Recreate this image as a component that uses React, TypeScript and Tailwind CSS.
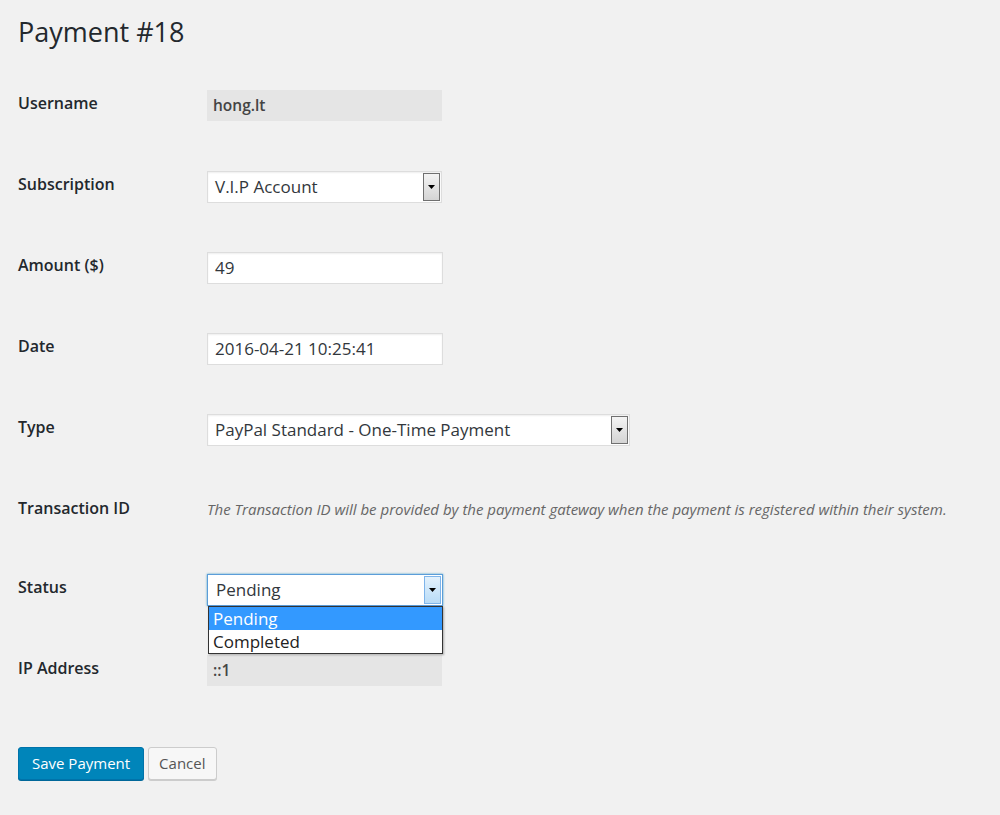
import React from 'react';

const font = "font-['Open_Sans',_'Liberation_Sans',_sans-serif]";

function SelectArrow({ focus }: { focus?: boolean }) {
  return (
    <div
      className={`absolute right-[1px] top-[1px] bottom-[1px] w-[17px] flex items-center justify-center border ${
        focus
          ? 'border-[#7eb4ea] bg-gradient-to-b from-[#e3f1fc] to-[#b9dcf7]'
          : 'border-[#707070] bg-gradient-to-b from-[#f4f4f4] to-[#d4d4d4]'
      }`}
    >
      <svg width="7" height="4" viewBox="0 0 7 4">
        <path d="M0 0h7L3.5 4z" fill="#000" />
      </svg>
    </div>
  );
}

function Row({ label, children }: { label: string; children: React.ReactNode }) {
  return (
    <div className="flex h-[81px] items-start">
      <div className="w-[189px] pt-[3px] text-[16px] leading-[20px] font-semibold text-[#23282d]">{label}</div>
      <div className="relative">{children}</div>
    </div>
  );
}

export default function App() {
  return (
    <div className={`min-h-[815px] w-[1000px] bg-[#f1f1f1] pl-[18px] ${font}`}>
      <h1 className="pt-[14px] text-[27px] leading-[36px] font-normal text-[#23282d]">Payment #18</h1>

      <div className="mt-[40px]">
        <Row label="Username">
          <div className="h-[31px] w-[235px] bg-[#e5e5e5] px-[6px] text-[15.5px] leading-[31px] font-semibold text-[#444]">hong.lt</div>
        </Row>
        <Row label="Subscription">
          <div className="relative h-[32px] w-[235px] border border-[#ddd] bg-white pl-[7px] text-[17px] leading-[30px] text-[#32373c] shadow-[inset_0_1px_2px_rgba(0,0,0,0.07)]">
            V.I.P Account
            <SelectArrow />
          </div>
        </Row>
        <Row label="Amount ($)">
          <div className="h-[32px] w-[236px] border border-[#ddd] bg-white pl-[7px] text-[17px] leading-[30px] text-[#32373c] shadow-[inset_0_1px_2px_rgba(0,0,0,0.07)]">
            49
          </div>
        </Row>
        <Row label="Date">
          <div className="h-[32px] w-[236px] border border-[#ddd] bg-white pl-[7px] text-[17px] leading-[30px] text-[#32373c] shadow-[inset_0_1px_2px_rgba(0,0,0,0.07)]">
            2016-04-21 10:25:41
          </div>
        </Row>
        <Row label="Type">
          <div className="relative h-[32px] w-[423px] border border-[#ddd] bg-white pl-[7px] text-[17px] leading-[30px] text-[#32373c] shadow-[inset_0_1px_2px_rgba(0,0,0,0.07)]">
            PayPal Standard - One-Time Payment
            <SelectArrow />
          </div>
        </Row>
        <Row label="Transaction ID">
          <p className="pt-[4px] text-[15px] leading-[20px] italic text-[#666]">
            The Transaction ID will be provided by the payment gateway when the payment is registered within their system.
          </p>
        </Row>
        <div className="-mt-[2px]">
          <Row label="Status">
            <div className="relative h-[32px] w-[236px] border border-[#5b9dd9] bg-white pl-[8px] text-[17px] leading-[30px] text-[#32373c] shadow-[0_0_2px_rgba(30,140,190,0.8)]">
              Pending
              <SelectArrow focus />
            </div>
            <div className="absolute left-[1px] top-[32px] z-10 w-[235px] border border-[#333] bg-white text-[17px] leading-[23px] text-[#222] shadow-[1px_1px_2px_rgba(0,0,0,0.3)]">
              <div className="bg-[#3399ff] pl-[4px] text-white">Pending</div>
              <div className="pl-[4px]">Completed</div>
            </div>
          </Row>
        </div>
        <Row label="IP Address">
          <div className="h-[31px] w-[235px] bg-[#e5e5e5] px-[6px] text-[15.5px] leading-[31px] font-semibold text-[#444]">::1</div>
        </Row>
      </div>

      <div className="mt-[11px] flex gap-[4px]">
        <button className="h-[33px] rounded-[3px] border border-[#0073aa] bg-[#0085ba] px-[13px] text-[15px] text-white shadow-[0_1px_0_#006799]">
          Save Payment
        </button>
        <button className="h-[33px] rounded-[3px] border border-[#ccc] bg-[#f7f7f7] px-[10px] text-[15px] text-[#555] shadow-[0_1px_0_#ccc]">
          Cancel
        </button>
      </div>
    </div>
  );
}
